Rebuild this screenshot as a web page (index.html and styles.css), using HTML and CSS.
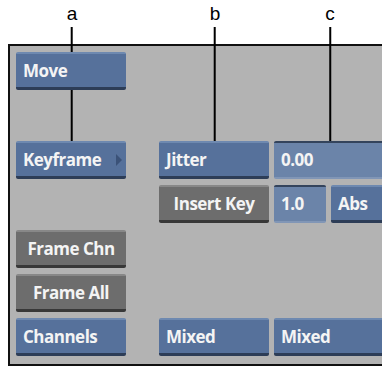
FILE: index.html
```html
<!DOCTYPE html>
<html lang="en">
<head>
    <meta charset="UTF-8">
    <title>Keyframe Panel</title>
    <link rel="stylesheet" href="styles.css">
</head>
<body>
    <div class="callouts">
        <span class="callout callout-a">a</span>
        <span class="callout callout-b">b</span>
        <span class="callout callout-c">c</span>
    </div>

    <div class="panel">
        <div class="grid">
            <div class="btn blue move">Move</div>

            <div class="btn blue keyframe">Keyframe<span class="arrow"></span></div>
            <div class="btn blue jitter">Jitter</div>
            <div class="field value">0.00</div>

            <div class="btn gray insert">Insert Key</div>
            <div class="field step">1.0</div>
            <div class="btn blue abs">Abs</div>

            <div class="btn gray frame-chn">Frame Chn</div>
            <div class="btn gray frame-all">Frame All</div>

            <div class="btn blue channels">Channels</div>
            <div class="btn blue mixed-1">Mixed</div>
            <div class="btn blue mixed-2">Mixed</div>
        </div>
    </div>
</body>
</html>
```

FILE: styles.css
```css
body {
    margin: 0;
    background: #ffffff;
    font-family: "Open Sans", "DejaVu Sans", sans-serif;
    overflow: hidden;
}
.callouts {
    position: relative;
    height: 44px;
}
.callout {
    position: absolute;
    top: 4px;
    font-family: "Liberation Sans", Arial, sans-serif;
    font-size: 19px;
    color: #000;
    line-height: 20px;
    transform: translateX(-50%);
}
/* leader lines drop from each letter onto its control */
.callout::after {
    content: "";
    position: absolute;
    left: 50%;
    top: 23px;
    width: 2px;
    margin-left: -1px;
    height: 123px;
    background: #000;
    z-index: 5;
}
.callout-a { left: 72px; }
.callout-b { left: 215px; }
.callout-c { left: 330px; }

.panel {
    margin-left: 8px;
    height: 318px;
    background: #b3b3b3;
    border-top: 2px solid #111;
    border-left: 2px solid #111;
    border-bottom: 2px solid #111;
}
.grid {
    display: grid;
    grid-template-columns: 110px 138px 52px 70px;
    grid-template-rows: repeat(7, 38px);
    column-gap: 5px;
    row-gap: 6.4px;
    padding: 6px 0 0 6px;
}
.btn, .field {
    box-sizing: border-box;
    color: #f4f4f4;
    font-weight: 700;
    font-size: 17px;
    letter-spacing: -0.5px;
    line-height: 34px;
    white-space: nowrap;
    overflow: hidden;
    border-radius: 2px;
    position: relative;
}
.btn.blue {
    background: #56719b;
    border-top: 2px solid #6e89b0;
    border-bottom: 3px solid #2d3d57;
    padding-left: 7px;
}
.btn.gray {
    background: #6d6d6d;
    border-top: 2px solid #888;
    border-bottom: 3px solid #383838;
    text-align: center;
}
.field {
    background: #6b84a9;
    border-top: 2px solid #34445c;
    border-bottom: 2px solid #8196b6;
    padding-left: 7px;
}
.move { grid-column: 1; grid-row: 1; }
.keyframe { grid-column: 1; grid-row: 3; }
.jitter { grid-column: 2; grid-row: 3; }
.value { grid-column: 3 / 5; grid-row: 3; }
.insert { grid-column: 2; grid-row: 4; }
.step { grid-column: 3; grid-row: 4; }
.abs { grid-column: 4; grid-row: 4; }
.frame-chn { grid-column: 1; grid-row: 5; }
.frame-all { grid-column: 1; grid-row: 6; }
.channels { grid-column: 1; grid-row: 7; }
.mixed-1 { grid-column: 2; grid-row: 7; }
.mixed-2 { grid-column: 3 / 5; grid-row: 7; }

.jitter, .insert, .mixed-1 { margin-left: 28px; }

.arrow {
    position: absolute;
    right: 4px;
    top: 11px;
    width: 0;
    height: 0;
    border-top: 6px solid transparent;
    border-bottom: 6px solid transparent;
    border-left: 6px solid #3b5278;
}
```
